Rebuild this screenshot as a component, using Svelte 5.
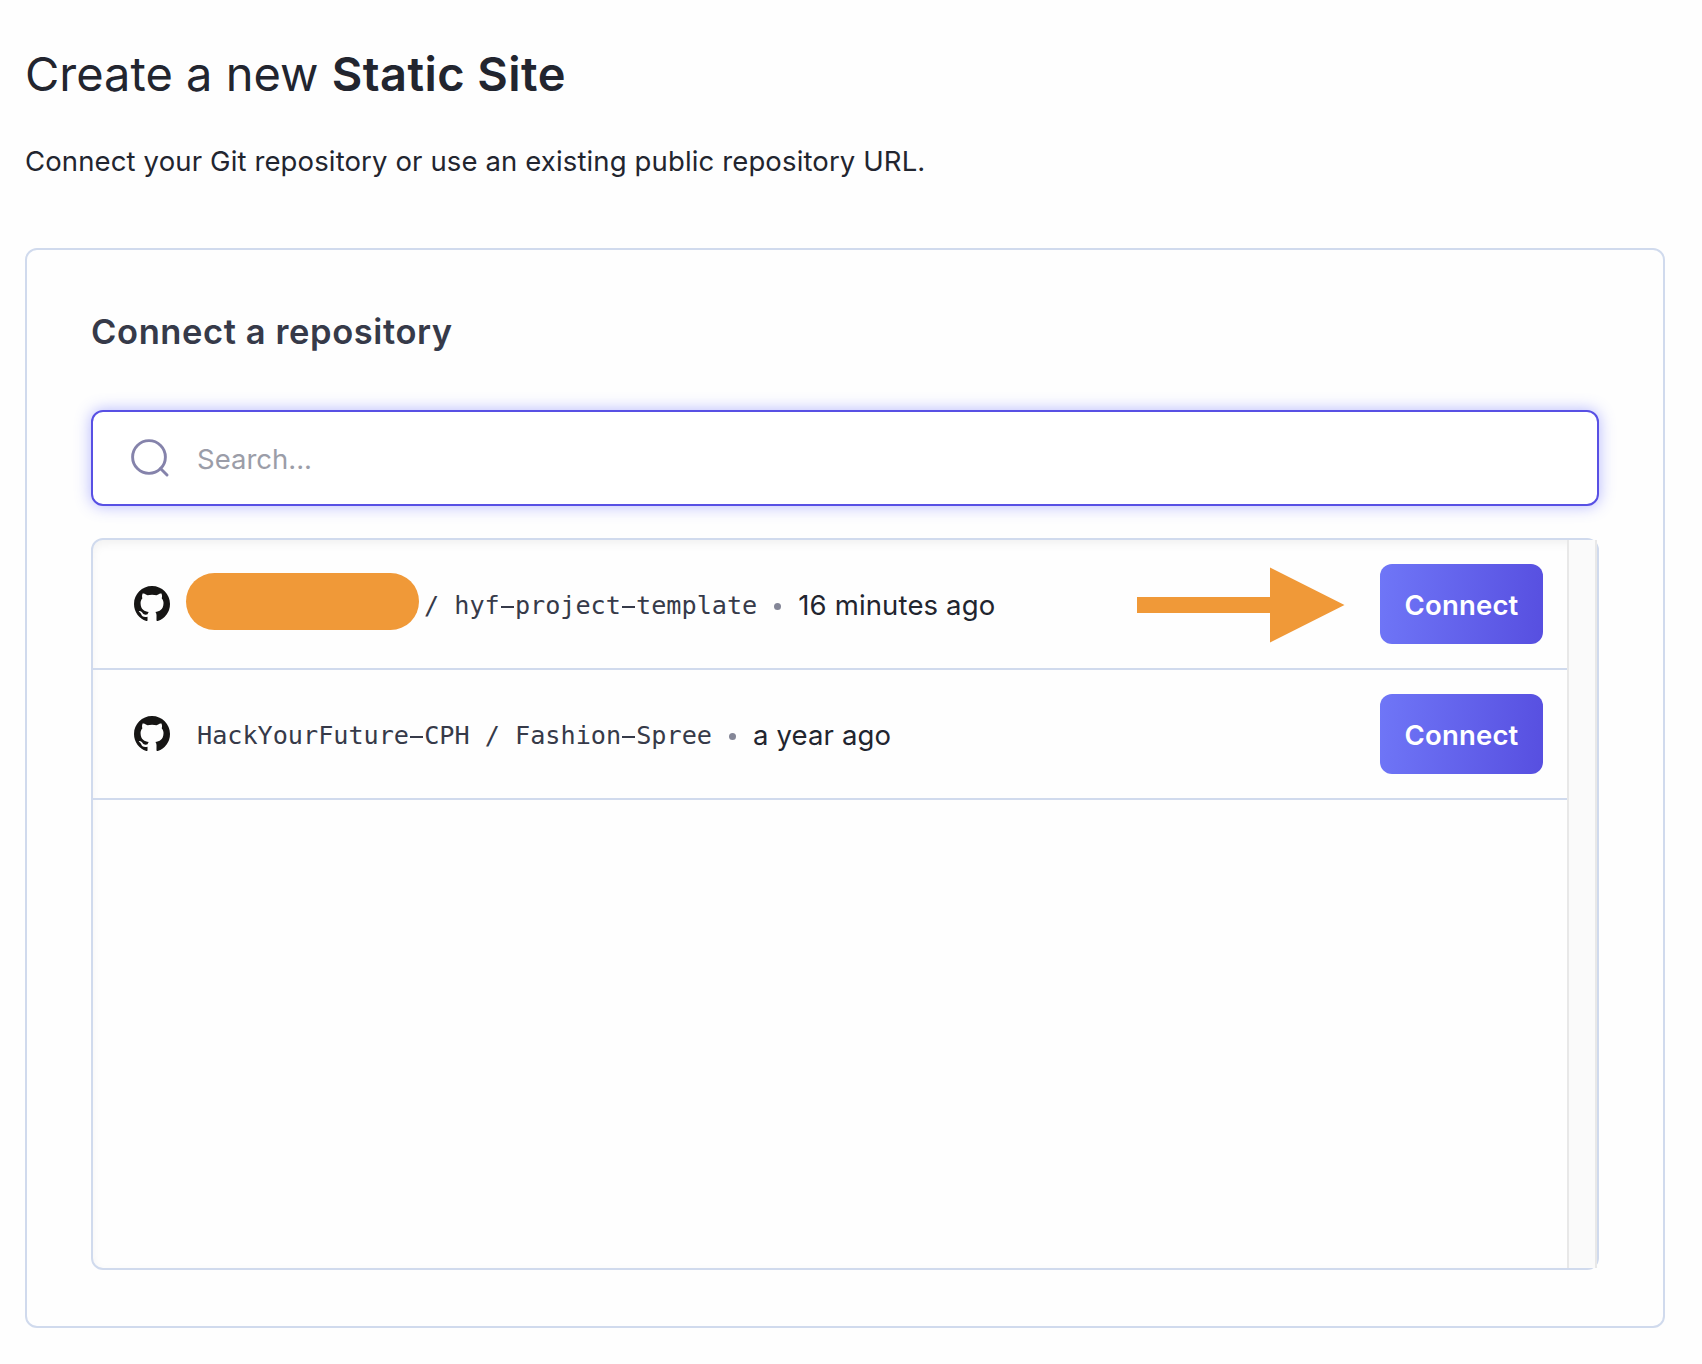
<script>
  const repositories = [
    { owner: null, name: 'hyf-project-template', updated: '16 minutes ago', highlighted: true },
    { owner: 'HackYourFuture-CPH', name: 'Fashion-Spree', updated: 'a year ago', highlighted: false },
  ];
</script>

{#snippet hyphenated(text)}{#each text.split('-') as part, i}{#if i > 0}<span class="hyphen">-</span>{/if}{part}{/each}{/snippet}

<main>
  <h1>Create a new <strong>Static Site</strong></h1>
  <p class="intro">Connect your Git repository or use an existing public repository URL.</p>

  <section class="card">
    <h2>Connect a repository</h2>

    <div class="search">
      <svg class="magnifier" viewBox="0 0 38 38" aria-hidden="true">
        <circle cx="18" cy="18" r="16.4" />
        <path d="M29.5 29.5 36 36" />
      </svg>
      <span class="placeholder">Search...</span>
    </div>

    <div class="list">
      <ul>
        {#each repositories as repo}
          <li>
            <svg class="github" viewBox="0 0 16 16" aria-hidden="true">
              <path d="M8 0C3.58 0 0 3.58 0 8c0 3.54 2.29 6.53 5.47 7.59.4.07.55-.17.55-.38 0-.19-.01-.82-.01-1.49-2.01.37-2.53-.49-2.69-.94-.09-.23-.48-.94-.82-1.13-.28-.15-.68-.52-.01-.53.63-.01 1.08.58 1.23.82.72 1.21 1.87.87 2.33.66.07-.52.28-.87.51-1.07-1.78-.2-3.64-.89-3.64-3.95 0-.87.31-1.59.82-2.15-.08-.2-.36-1.02.08-2.12 0 0 .67-.21 2.2.82.64-.18 1.32-.27 2-.27s1.36.09 2 .27c1.53-1.04 2.2-.82 2.2-.82.44 1.1.16 1.92.08 2.12.51.56.82 1.27.82 2.15 0 3.07-1.87 3.75-3.65 3.95.29.25.54.73.54 1.48 0 1.07-.01 1.93-.01 2.2 0 .21.15.46.55.38A8.01 8.01 0 0 0 16 8c0-4.42-3.58-8-8-8z" />
            </svg>
            {#if repo.owner}
              <span class="repo">{@render hyphenated(repo.owner + ' / ' + repo.name)}</span>
            {:else}
              <span class="redacted"></span>
              <span class="repo">{@render hyphenated('/ ' + repo.name)}</span>
            {/if}
            <i class="dot"></i>
            <span class="time">{repo.updated}</span>
            {#if repo.highlighted}
              <svg class="arrow" viewBox="0 0 208 76" aria-hidden="true">
                <path d="M0 30H133V0.5L207.500 38 133 75.500V46H0z" />
              </svg>
            {/if}
            <button>Connect</button>
          </li>
        {/each}
      </ul>
      <div class="scrollbar"></div>
    </div>
  </section>
</main>

<style>
  :global(body) {
    margin: 0;
    background: #fefefe;
  }
  main {
    box-sizing: border-box;
    width: 1702px;
    height: 1364px;
    padding: 44px 37px 36px 25px;
    font-family: Inter, 'Liberation Sans', sans-serif;
    font-size: 27.5px;
    letter-spacing: 0.13px;
    color: #22252f;
  }
  h1 {
    margin: 0;
    height: 60px;
    line-height: 60px;
    font-size: 47px;
    font-weight: 400;
    letter-spacing: 0;
    white-space: nowrap;
  }
  h1 strong {
    font-weight: 600;
    letter-spacing: 0.45px;
  }
  .intro {
    margin: 37px 0 0;
    height: 40px;
    line-height: 40px;
  }
  .card {
    box-sizing: border-box;
    margin-top: 67px;
    height: 1080px;
    padding: 58px 64px 56px;
    border: 2px solid #d0daed;
    border-radius: 12px;
  }
  h2 {
    margin: 0;
    height: 48px;
    line-height: 48px;
    font-size: 34.5px;
    font-weight: 600;
    letter-spacing: 0.6px;
    color: #363a49;
  }
  .search {
    box-sizing: border-box;
    display: flex;
    align-items: center;
    margin-top: 54px;
    height: 96px;
    padding-left: 38px;
    border: 2px solid #5850e4;
    border-radius: 12px;
    background: #fff;
    box-shadow: 0 0 16px rgba(88, 96, 255, 0.45);
    color: #9b9da8;
  }
  .magnifier {
    width: 38px;
    height: 38px;
    margin-right: 28px;
    fill: none;
    stroke: #8583ab;
    stroke-width: 2.9;
    stroke-linecap: round;
  }
  .placeholder {
    padding-top: 2px;
    letter-spacing: 0;
  }
  .list {
    box-sizing: border-box;
    display: flex;
    margin-top: 32px;
    height: 732px;
    border: 2px solid #d0daed;
    border-radius: 12px;
    box-shadow: inset 0 4px 10px rgba(0, 0, 0, 0.05);
  }
  ul {
    flex: 1;
    min-width: 0;
    margin: 0;
    padding: 0;
    list-style: none;
  }
  li {
    box-sizing: border-box;
    display: flex;
    align-items: center;
    height: 130px;
    padding: 0 24px 0 41px;
    border-bottom: 2px solid #d0daed;
  }
  .github {
    width: 36px;
    height: 36px;
    margin-right: 27px;
    fill: #161514;
  }
  .redacted {
    width: 233px;
    height: 57px;
    margin: -5px 5px 0 -11px;
    border-radius: 29px;
    background: #f09938;
  }
  .repo {
    padding-top: 2px;
    font-family: 'DejaVu Sans Mono', monospace;
    font-size: 25.2px;
    letter-spacing: -0.02px;
    color: #363a49;
  }
  /* A bar behind the glyph lengthens the hyphen to nearly the full cell. */
  .hyphen {
    background: linear-gradient(#363a49, #363a49) 50% 15px / 13px 2px no-repeat;
  }
  .dot {
    width: 7px;
    height: 7px;
    margin: 5px 17px 0 17px;
    border-radius: 50%;
    background: #848697;
  }
  .time {
    padding-top: 2px;
    letter-spacing: 0.15px;
  }
  .arrow {
    width: 208px;
    height: 76px;
    margin-top: 1px;
    margin-left: auto;
    fill: #f09938;
  }
  button {
    width: 163px;
    height: 80px;
    margin-left: auto;
    padding: 2px 0 0;
    border: 0;
    border-radius: 12px;
    background: linear-gradient(95deg, #6f76f7, #574fe0);
    color: #fff;
    font: 600 27.5px Inter, 'Liberation Sans', sans-serif;
    letter-spacing: 0.2px;
  }
  .arrow + button { margin-left: 35px; }
  .scrollbar {
    box-sizing: border-box;
    width: 30px;
    border: solid #e8e8e8;
    border-width: 0 2px;
    background: #fafafa;
  }
</style>
